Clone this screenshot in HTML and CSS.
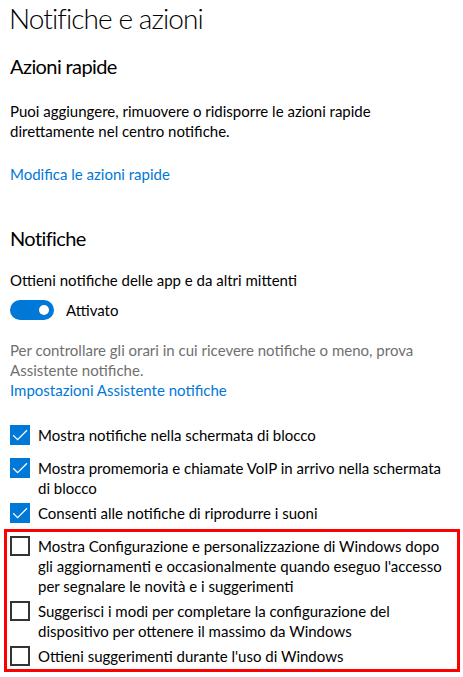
FILE: index.html
```html
<!DOCTYPE html>
<html lang="it">
<head>
<meta charset="utf-8">
<title>Notifiche e azioni</title>
<link rel="stylesheet" href="styles.css">
</head>
<body>
<main class="page">
  <h1 class="title">Notifiche e azioni</h1>

  <h2 class="section-title first">Azioni rapide</h2>
  <p class="text para">Puoi aggiungere, rimuovere o ridisporre le azioni rapide<br>direttamente nel centro notifiche.</p>
  <a class="link link-quick" href="#">Modifica le azioni rapide</a>

  <h2 class="section-title second">Notifiche</h2>
  <p class="text label">Ottieni notifiche delle app e da altri mittenti</p>
  <div class="toggle-row">
    <span class="toggle"><span class="knob"></span></span>
    <span class="text">Attivato</span>
  </div>
  <p class="text muted">Per controllare gli orari in cui ricevere notifiche o meno, prova<br>Assistente notifiche.</p>
  <a class="link" href="#">Impostazioni Assistente notifiche</a>

  <div class="checks">
    <div class="check-row">
      <span class="box checked"><svg viewBox="0 0 20 20" width="20" height="20"><path d="M3.2 10.2 L7.6 14.6 L17 5.2" fill="none" stroke="#fff" stroke-width="1.3"/></svg></span>
      <span class="text">Mostra notifiche nella schermata di blocco</span>
    </div>
    <div class="check-row">
      <span class="box checked"><svg viewBox="0 0 20 20" width="20" height="20"><path d="M3.2 10.2 L7.6 14.6 L17 5.2" fill="none" stroke="#fff" stroke-width="1.3"/></svg></span>
      <span class="text">Mostra promemoria e chiamate VoIP in arrivo nella schermata<br>di blocco</span>
    </div>
    <div class="check-row">
      <span class="box checked"><svg viewBox="0 0 20 20" width="20" height="20"><path d="M3.2 10.2 L7.6 14.6 L17 5.2" fill="none" stroke="#fff" stroke-width="1.3"/></svg></span>
      <span class="text">Consenti alle notifiche di riprodurre i suoni</span>
    </div>
    <div class="highlight">
      <div class="check-row">
        <span class="box"></span>
        <span class="text">Mostra Configurazione e personalizzazione di Windows dopo<br>gli aggiornamenti e occasionalmente quando eseguo l'accesso<br>per segnalare le novità e i suggerimenti</span>
      </div>
      <div class="check-row">
        <span class="box"></span>
        <span class="text">Suggerisci i modi per completare la configurazione del<br>dispositivo per ottenere il massimo da Windows</span>
      </div>
      <div class="check-row last">
        <span class="box"></span>
        <span class="text">Ottieni suggerimenti durante l'uso di Windows</span>
      </div>
    </div>
  </div>
</main>
</body>
</html>
```

FILE: styles.css
```css
html, body {
  margin: 0;
  padding: 0;
  background: #fff;
}
body {
  font-family: Lato, "Open Sans", sans-serif;
  color: #000;
  width: 463px;
  overflow: hidden;
}
.page {
  padding: 0 0 0 10px;
  display: flex;
  flex-direction: column;
  align-items: flex-start;
}
.title {
  margin: 0 0 0 -1px;
  font-size: 28px;
  font-weight: 300;
  line-height: 36px;
  letter-spacing: -0.9px;
  white-space: nowrap;
}
.section-title {
  margin: 0;
  font-size: 20px;
  font-weight: 400;
  line-height: 28px;
  letter-spacing: -0.6px;
}
.section-title.first { margin-top: 16px; }
.section-title.second { margin-top: 40px; }
.text {
  font-size: 15px;
  line-height: 20px;
  white-space: nowrap;
}
.para { margin: 21px 0 0; }
.link {
  font-size: 15px;
  line-height: 20px;
  color: #0078d7;
  text-decoration: none;
}
.link-quick { margin-top: 23px; }
.label { margin: 18px 0 0; }
.toggle-row {
  margin-top: 10px;
  display: flex;
  align-items: flex-start;
  gap: 12px;
}
.toggle {
  width: 44px;
  height: 20px;
  border-radius: 10px;
  background: #0078d7;
  display: flex;
  align-items: center;
  justify-content: flex-end;
  padding-right: 5px;
  box-sizing: border-box;
}
.knob {
  width: 10px;
  height: 10px;
  border-radius: 50%;
  background: #fff;
}
.muted {
  margin: 20px 0 0;
  color: #6f6f6f;
}
.checks {
  margin-top: 25px;
  display: flex;
  flex-direction: column;
  align-self: stretch;
}
.check-row {
  display: flex;
  align-items: flex-start;
  gap: 8px;
  min-height: 33px;
  padding-bottom: 5px;
  box-sizing: border-box;
}
.check-row.last {
  min-height: 0;
  padding-bottom: 0;
}
.box {
  flex: none;
  width: 20px;
  height: 20px;
  box-sizing: border-box;
  border: 2px solid #333;
  background: #fff;
}
.box.checked {
  border: none;
  background: #0078d7;
}
.box svg { display: block; }
.highlight {
  margin: -7px 3px 0 -6px;
  padding: 4px 0 3px 3px;
  border: 3px solid #f00;
  display: flex;
  flex-direction: column;
}
```
